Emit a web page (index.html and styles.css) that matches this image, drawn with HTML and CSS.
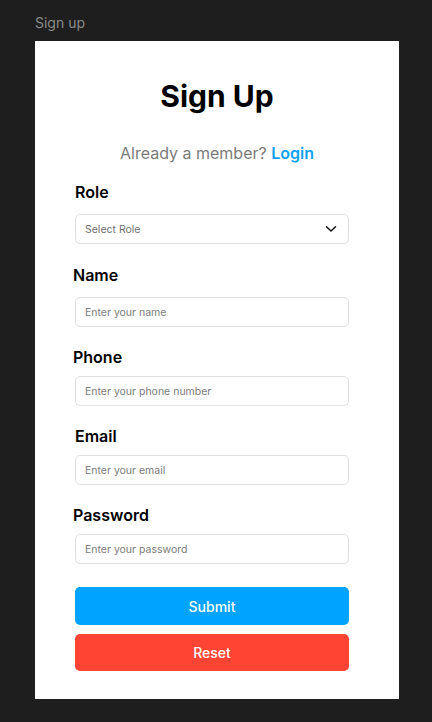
FILE: index.html
```html
<!DOCTYPE html>
<html lang="en">
<head>
<meta charset="utf-8">
<title>Sign up</title>
<link rel="stylesheet" href="styles.css">
</head>
<body>
<div class="topbar"><span class="frame-name">Sign up</span></div>
<main class="frame">
  <h1 class="title">Sign Up</h1>
  <p class="subtitle">Already a member? <a class="login" href="#">Login</a></p>
  <form class="form">
    <div class="field field-first">
      <label class="label label-high">Role</label>
      <div class="control select">
        <span class="select-text">Select Role</span>
        <svg class="chevron" width="12" height="8" viewBox="0 0 12 8"><path d="M1.5 1.8 L6 6 L10.5 1.8" fill="none" stroke="#111" stroke-width="1.5" stroke-linecap="round" stroke-linejoin="round"/></svg>
      </div>
    </div>
    <div class="field">
      <label class="label label-high shift">Name</label>
      <input class="control" type="text" placeholder="Enter your name">
    </div>
    <div class="field">
      <label class="label shift">Phone</label>
      <input class="control" type="text" placeholder="Enter your phone number">
    </div>
    <div class="field">
      <label class="label">Email</label>
      <input class="control" type="text" placeholder="Enter your email">
    </div>
    <div class="field field-last">
      <label class="label shift">Password</label>
      <input class="control" type="password" placeholder="Enter your password">
    </div>
    <div class="actions">
      <button type="button" class="btn submit">Submit</button>
      <button type="reset" class="btn reset">Reset</button>
    </div>
  </form>
</main>
</body>
</html>
```

FILE: styles.css
```css
* { box-sizing: border-box; }
html, body {
  margin: 0;
  padding: 0;
  background: #1e1e1e;
  font-family: Inter, "Noto Sans", sans-serif;
}
.topbar {
  height: 41px;
  padding: 14px 0 0 35px;
}
.frame-name {
  display: block;
  font-size: 14px;
  line-height: 17px;
  color: #8a8a8a;
}
.frame {
  margin-left: 35px;
  width: 364px;
  height: 658px;
  background: #ffffff;
  padding-top: 37px;
}
.title {
  margin: 0;
  text-align: center;
  font-size: 30px;
  line-height: 36px;
  font-weight: 700;
  color: #000;
}
.subtitle {
  margin: 29px 0 0;
  text-align: center;
  font-size: 16px;
  line-height: 20px;
  color: #7b7b7b;
}
.login {
  color: #0ea2f5;
  font-weight: 600;
  text-decoration: none;
}
.form {
  margin: 19px 0 0 40px;
  width: 274px;
}
.field {
  margin-bottom: 20px;
}
.field-first { margin-bottom: 21px; }
.field-last { margin-bottom: 23px; }
.label {
  display: block;
  font-size: 16px;
  line-height: 20px;
  font-weight: 600;
  color: #000;
  margin-bottom: 9px;
}
.label-high { margin-bottom: 12px; }
.label.shift { margin-left: -2px; }
.control {
  display: block;
  width: 100%;
  height: 30px;
  border: 1px solid #e2e2e2;
  border-radius: 5px;
  padding: 0 9px;
  font-family: Inter, "Noto Sans", sans-serif;
  font-size: 10.5px;
  color: #333;
  background: #fff;
  outline: none;
}
.control::placeholder { color: #7d7d7d; }
.select {
  display: flex;
  align-items: center;
  justify-content: space-between;
  padding-right: 11px;
}
.select-text { color: #6f6f6f; }
.actions {
  display: flex;
  flex-direction: column;
  gap: 9px;
}
.btn {
  display: block;
  width: 100%;
  height: 38px;
  border: none;
  border-radius: 5px;
  font-family: Inter, "Noto Sans", sans-serif;
  font-size: 14px;
  font-weight: 500;
  color: #fff;
  cursor: pointer;
}
.submit { background: #00a3ff; }
.reset { background: #ff4433; height: 37px; }
```
